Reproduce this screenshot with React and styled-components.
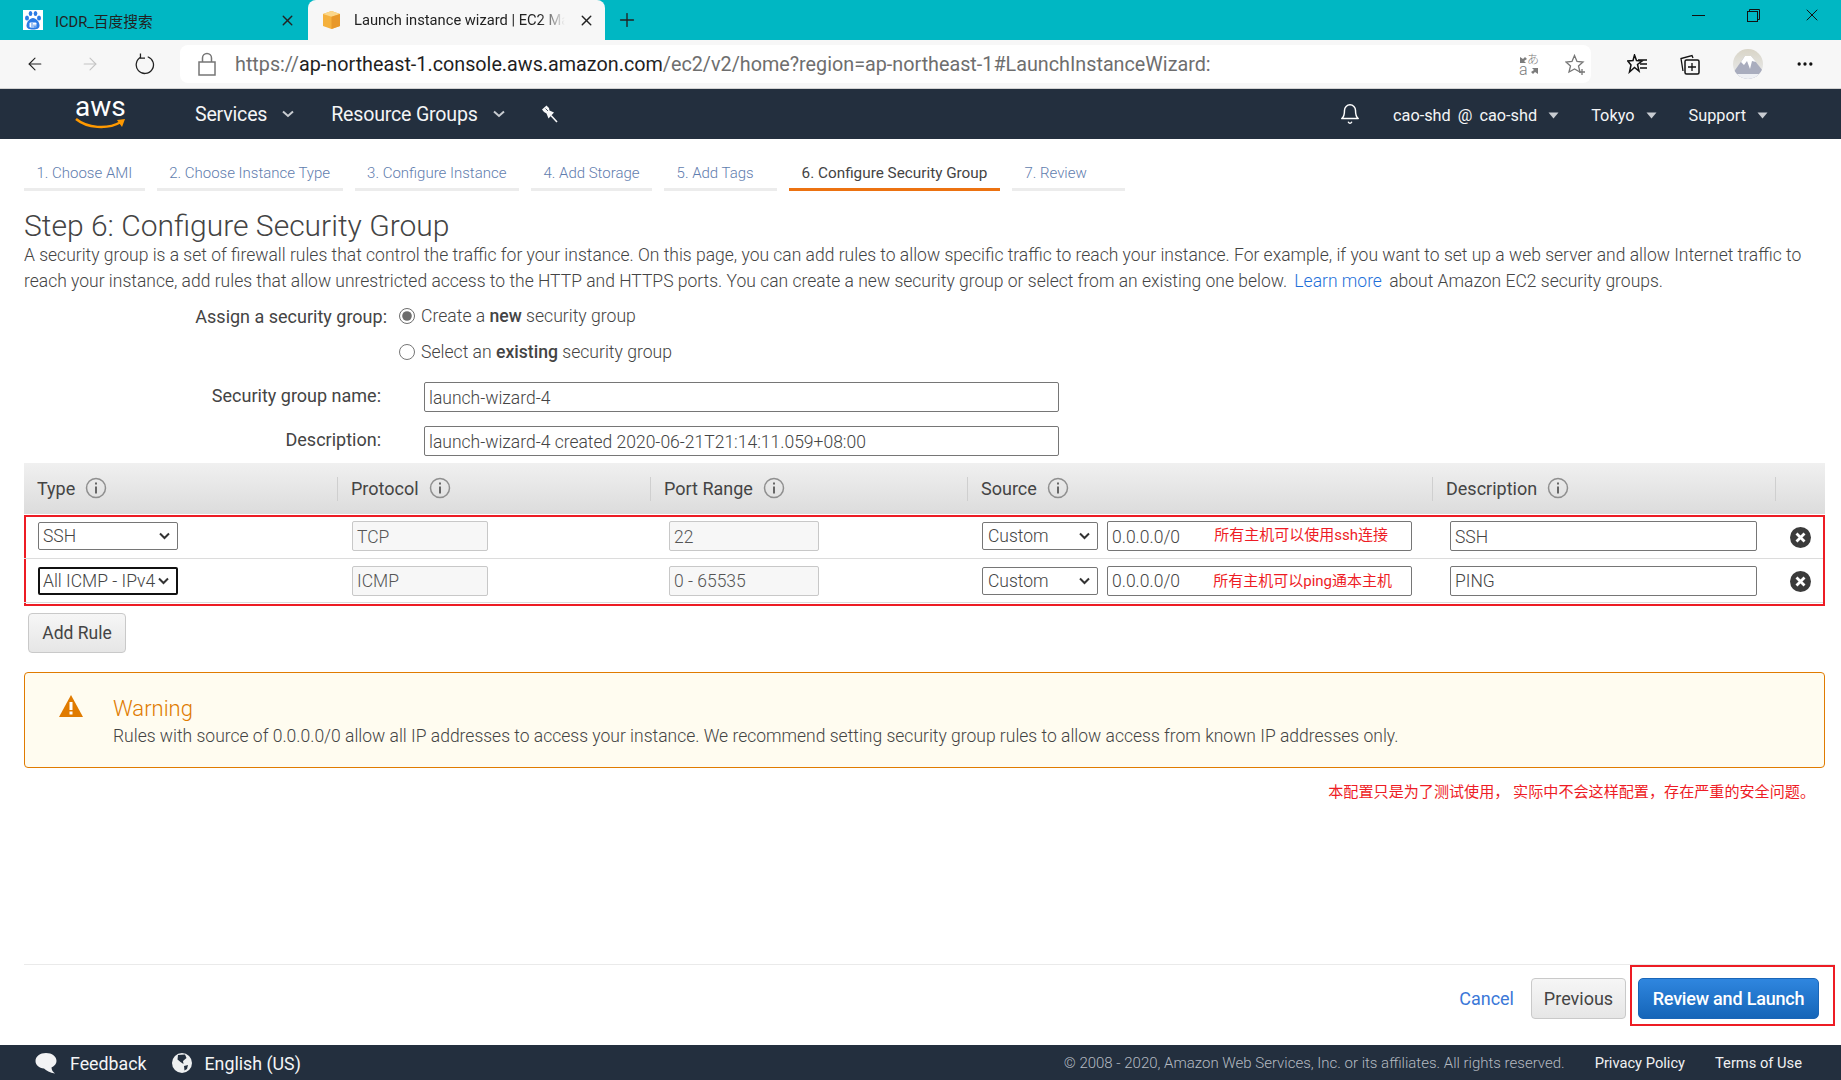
import React from "react";
import styled, { createGlobalStyle } from "styled-components";
import { FiBell, FiPlus, FiX, FiArrowLeft, FiArrowRight, FiMoreHorizontal } from "react-icons/fi";

const steps = [
  "1. Choose AMI",
  "2. Choose Instance Type",
  "3. Configure Instance",
  "4. Add Storage",
  "5. Add Tags",
  "6. Configure Security Group",
  "7. Review",
];

const rules = [
  { type: "SSH", protocol: "TCP", port: "22", note: "所有主机可以使用ssh连接", noteRight: 24, noteTop: 2, desc: "SSH", focused: false },
  { type: "All ICMP - IPv4", protocol: "ICMP", port: "0 - 65535", note: "所有主机可以ping通本主机", noteRight: 20, noteTop: 3, desc: "PING", focused: true },
];

const selectArrow =
  "url(\"data:image/svg+xml,%3Csvg xmlns='http://www.w3.org/2000/svg' width='11' height='8'%3E%3Cpath d='M1 1.5L5.5 6L10 1.5' fill='none' stroke='%23333' stroke-width='2'/%3E%3C/svg%3E\")";

const InfoIcon = () => (
  <svg width="22" height="22" viewBox="0 0 22 22">
    <circle cx="11" cy="11" r="9.5" fill="none" stroke="#8f8f8f" strokeWidth="1.5" />
    <rect x="10" y="9.5" width="2" height="7" fill="#666" />
    <rect x="10" y="5.5" width="2" height="2" fill="#666" />
  </svg>
);

const Caret = () => (
  <svg width="11" height="7" viewBox="0 0 11 7">
    <path d="M0.5 0.5H10.5L5.5 6.5Z" fill="#c8ccd1" />
  </svg>
);

const Chevron = () => (
  <svg width="12" height="8" viewBox="0 0 12 8">
    <path d="M1 1.5L6 6L11 1.5" fill="none" stroke="#c8ccd1" strokeWidth="2" />
  </svg>
);

const BaiduIcon = () => (
  <svg width="20" height="20" viewBox="0 0 20 20">
    <rect width="20" height="20" fill="#fff" />
    <ellipse cx="4" cy="8" rx="2" ry="2.6" fill="#2c7be5" />
    <ellipse cx="16" cy="8" rx="2" ry="2.6" fill="#2c7be5" />
    <ellipse cx="7.5" cy="3.5" rx="1.8" ry="2.6" fill="#2c7be5" />
    <ellipse cx="12.5" cy="3.5" rx="1.8" ry="2.6" fill="#2c7be5" />
    <path d="M10 8C7 8 3.5 12 3.5 15.5C3.5 18.5 6 19.5 10 19.5S16.5 18.5 16.5 15.5C16.5 12 13 8 10 8Z" fill="#2c7be5" />
    <rect x="6.5" y="12.5" width="7" height="5" rx="1" fill="#fff" />
    <path d="M9 13V17M11 14.5V17H13V14.5" fill="none" stroke="#2c7be5" strokeWidth="0.9" />
  </svg>
);

const CubeIcon = () => (
  <svg width="19" height="20" viewBox="0 0 19 20">
    <path d="M9.5 1L18 4V16L9.5 19L1 16V4Z" fill="#f5b13d" />
    <path d="M9.5 1L18 4L9.5 6.8L1 4Z" fill="#fbd78a" />
    <path d="M9.5 6.8L18 4V16L9.5 19Z" fill="#e8982a" />
  </svg>
);

const LockIcon = () => (
  <svg width="18" height="24" viewBox="0 0 18 24">
    <rect x="1" y="10" width="16" height="13" fill="none" stroke="#767676" strokeWidth="1.5" />
    <path d="M4.5 10V6A4.5 4.5 0 0 1 13.5 6V10" fill="none" stroke="#767676" strokeWidth="1.5" />
  </svg>
);

const RefreshIcon = () => (
  <svg width="22" height="24" viewBox="0 0 22 24">
    <path d="M6.5 4.5A9.5 9.5 0 1 0 14 4" fill="none" stroke="#222" strokeWidth="1.4" />
    <path d="M6 0.5V5.5H11" fill="none" stroke="#222" strokeWidth="1.4" />
  </svg>
);

const TranslateIcon = () => (
  <svg width="20" height="21" viewBox="0 0 20 21" overflow="visible">
    <path d="M1 3V9H7L5 7L8 5L6 3L4 5ZM19 20V14H13L15 16L12 18L14 20L16 18Z" fill="#7c7c7c" />
    <text x="8" y="10" fontSize="12" fill="#7c7c7c" fontFamily="Noto Sans CJK JP, sans-serif">あ</text>
    <text x="0" y="21" fontSize="16" fill="#7c7c7c" fontFamily="Roboto, sans-serif">a</text>
  </svg>
);

const StarPlusIcon = () => (
  <svg width="21" height="21" viewBox="0 0 21 21">
    <path d="M9.5 1.5L12 7.5L18 8L13.5 12L15 18L9.5 15L4 18L5.5 12L1 8L7 7.5Z" fill="none" stroke="#777" strokeWidth="1.3" />
    <path d="M17 15V21M14 18H20" stroke="#777" strokeWidth="1.3" />
  </svg>
);

const FavoritesIcon = () => (
  <svg width="21" height="20" viewBox="0 0 21 20">
    <path d="M7.5 1L9.5 6.5L15 7L10.5 10.5L12 17L7.5 13.5L2.5 18L4 11L0.8 7L6 6.5Z" fill="none" stroke="#111" strokeWidth="1.5" />
    <path d="M11 6H20M13 10H20M13 14H20" stroke="#111" strokeWidth="1.4" />
  </svg>
);

const CollectionsIcon = () => (
  <svg width="20" height="21" viewBox="0 0 20 21">
    <path d="M3 17L1 4.5L12 1.5L13 4" fill="none" stroke="#111" strokeWidth="1.3" />
    <rect x="5" y="6" width="14" height="14" rx="1.5" fill="none" stroke="#111" strokeWidth="1.5" />
    <path d="M12 9V17M8 13H16" stroke="#111" strokeWidth="1.3" />
  </svg>
);

const MountainAvatar = () => (
  <svg width="30" height="30" viewBox="0 0 30 30">
    <defs>
      <clipPath id="avatar-clip">
        <circle cx="15" cy="15" r="15" />
      </clipPath>
      <linearGradient id="avatar-sky" x1="0" y1="0" x2="0" y2="1">
        <stop offset="0" stopColor="#d8d4c6" />
        <stop offset="1" stopColor="#eceef2" />
      </linearGradient>
    </defs>
    <g clipPath="url(#avatar-clip)">
      <rect width="30" height="30" fill="url(#avatar-sky)" />
      <path d="M0 24L12 7H18L30 22V30H0Z" fill="#a9adbe" />
      <path d="M8 13L12 7H18L23 13L19 12L17 20L14 12L11 16Z" fill="#fff" />
      <rect y="25" width="30" height="5" fill="#eef0f4" />
    </g>
  </svg>
);

const RestoreIcon = () => (
  <svg width="13" height="13" viewBox="0 0 13 13">
    <rect x="0.5" y="2.5" width="10" height="10" fill="none" stroke="#111" />
    <path d="M2.5 2.5V0.5H12.5V10.5H10.5" fill="none" stroke="#111" />
  </svg>
);

const PinIcon = () => (
  <svg width="16" height="18" viewBox="0 0 16 18">
    <path d="M0 4.5L4.5 0.5L7 3L7.5 5.5L12 7.5L6.5 13.5L4.5 8.5L2 7Z" fill="#f7f8f9" />
    <path d="M9 10.5L15 17" stroke="#f7f8f9" strokeWidth="1.6" />
    <path d="M3.5 3.5L6 6" stroke="#232f3e" strokeWidth="0.8" />
  </svg>
);

const WarningIcon = () => (
  <svg width="24" height="22" viewBox="0 0 24 22">
    <path d="M12 0L24 22H0Z" fill="#e07b00" />
    <rect x="10.5" y="7" width="3" height="8" fill="#fff" />
    <rect x="10.5" y="16.5" width="3" height="3" fill="#fff" />
  </svg>
);

const RemoveIcon = () => (
  <svg width="21" height="21" viewBox="0 0 21 21">
    <circle cx="10.5" cy="10.5" r="10.5" fill="#3b3b3b" />
    <path d="M6.5 6.5L14.5 14.5M14.5 6.5L6.5 14.5" stroke="#fff" strokeWidth="2.8" />
  </svg>
);

const BubbleIcon = () => (
  <svg width="22" height="21" viewBox="0 0 22 21">
    <path d="M11 0C5 0 0.5 3.5 0.5 8C0.5 12 4 15 9 15.5C11 17.5 15 20 20 20.5C18 19 16.5 17 16.5 14.5C19.5 13 21.5 11 21.5 8C21.5 3.5 17 0 11 0Z" fill="#f2f3f4" />
  </svg>
);

const GlobeIcon = () => (
  <svg width="20" height="20" viewBox="0 0 20 20">
    <circle cx="10" cy="10" r="10" fill="#eef0f1" />
    <path d="M6 2L13 1.5L14.5 5L11 8L11.5 11L8.5 9L5.5 6.5Z" fill="#232f3e" />
    <path d="M12 13L16 12L15 16L12.5 17.5Z" fill="#232f3e" />
  </svg>
);

const App = () => {
  return (
    <Page>
      <GlobalStyle />

      <TabStrip>
        <BrowserTab>
          <BaiduIcon />
          <TabTitle>ICDR_百度搜索</TabTitle>
          <TabClose><FiX size={17} /></TabClose>
        </BrowserTab>
        <BrowserTab $active>
          <CubeIcon />
          <TabTitle $fade>Launch instance wizard | EC2 Management Console</TabTitle>
          <TabClose><FiX size={17} /></TabClose>
        </BrowserTab>
        <NewTab><FiPlus size={22} strokeWidth={1.5} /></NewTab>
        <WindowButtons>
          <Minimize />
          <RestoreIcon />
          <FiX size={20} strokeWidth={1.2} />
        </WindowButtons>
      </TabStrip>

      <Toolbar>
        <ToolButton><FiArrowLeft size={24} strokeWidth={1.3} /></ToolButton>
        <ToolButton $muted><FiArrowRight size={24} strokeWidth={1.3} /></ToolButton>
        <ToolButton><RefreshIcon /></ToolButton>
        <AddressPill>
          <LockIcon />
          <UrlText>
            <UrlDim>https://</UrlDim>ap-northeast-1.console.aws.amazon.com<UrlDim>/ec2/v2/home?region=ap-northeast-1#LaunchInstanceWizard:</UrlDim>
          </UrlText>
          <PillIcons>
            <TranslateIcon />
            <StarPlusIcon />
          </PillIcons>
        </AddressPill>
        <ToolIcons>
          <FavoritesIcon />
          <CollectionsIcon />
          <MountainAvatar />
          <FiMoreHorizontal size={20} />
        </ToolIcons>
      </Toolbar>

      <NavBar>
        <AwsLogo>
          <svg width="52" height="34" viewBox="0 0 52 34" overflow="visible">
            <text x="0" y="19" fontSize="28" fill="#fff" fontFamily="Roboto, sans-serif">aws</text>
            <path d="M1 22C12 31 32 33 46 25" fill="none" stroke="#f90" strokeWidth="2.5" />
            <path d="M42 23L50 22L47 30Z" fill="#f90" />
          </svg>
        </AwsLogo>
        <NavMenu>Services <Chevron /></NavMenu>
        <NavMenu>Resource Groups <Chevron /></NavMenu>
        <PinIcon />
        <NavRight>
          <FiBell size={22} strokeWidth={1.6} color="#fff" />
          <NavSmall $wide>cao-shd @ cao-shd <Caret /></NavSmall>
          <NavSmall>Tokyo <Caret /></NavSmall>
          <NavSmall>Support <Caret /></NavSmall>
        </NavRight>
      </NavBar>

      <Content>
        <Steps>
          {steps.map((step, i) => (
            <Step key={step} $active={i === 5}>{step}</Step>
          ))}
        </Steps>

        <Title>Step 6: Configure Security Group</Title>
        <Intro>
          A security group is a set of firewall rules that control the traffic for your instance. On this page, you can add rules to allow specific traffic to reach your instance. For example, if you want to set up a web server and allow Internet traffic to reach your instance, add rules that allow unrestricted access to the HTTP and HTTPS ports. You can create a new security group or select from an existing one below. <IntroLink>Learn more</IntroLink> about Amazon EC2 security groups.
        </Intro>

        <RadioForm>
          <FormLabel>Assign a security group:</FormLabel>
          <RadioLine>
            <input type="radio" name="assign" defaultChecked />
            <span>Create a <b>new</b> security group</span>
          </RadioLine>
          <span />
          <RadioLine>
            <input type="radio" name="assign" />
            <span>Select an <b>existing</b> security group</span>
          </RadioLine>
        </RadioForm>

        <NameForm>
          <NameLabel>Security group name:</NameLabel>
          <NameInput value="launch-wizard-4" readOnly />
          <NameLabel>Description:</NameLabel>
          <NameInput value="launch-wizard-4 created 2020-06-21T21:14:11.059+08:00" readOnly />
        </NameForm>

        <TableHead>
          <HeadCell>Type <InfoIcon /></HeadCell>
          <HeadCell $rule>Protocol <InfoIcon /></HeadCell>
          <HeadCell $rule>Port Range <InfoIcon /></HeadCell>
          <HeadCell $rule>Source <InfoIcon /></HeadCell>
          <HeadCell $rule>Description <InfoIcon /></HeadCell>
          <HeadCell $rule />
        </TableHead>

        <RuleBox>
          {rules.map((rule) => (
            <RuleRow key={rule.desc}>
              <TypeSelect value={rule.type} $focused={rule.focused} onChange={() => {}}>
                <option>{rule.type}</option>
              </TypeSelect>
              <GreyInput $width={136} $left={15} value={rule.protocol} readOnly />
              <GreyInput $width={150} $left={19} value={rule.port} readOnly />
              <SourceCell>
                <SourceSelect value="Custom" onChange={() => {}}>
                  <option>Custom</option>
                </SourceSelect>
                <CidrWrap>
                  <WhiteInput value="0.0.0.0/0" readOnly />
                  <CidrNote $right={rule.noteRight} $top={rule.noteTop}>{rule.note}</CidrNote>
                </CidrWrap>
              </SourceCell>
              <WhiteInput value={rule.desc} readOnly />
              <RemoveCell><RemoveIcon /></RemoveCell>
            </RuleRow>
          ))}
        </RuleBox>

        <AddRule>Add Rule</AddRule>

        <WarningBox>
          <WarningIcon />
          <div>
            <WarningTitle>Warning</WarningTitle>
            <WarningText>Rules with source of 0.0.0.0/0 allow all IP addresses to access your instance. We recommend setting security group rules to allow access from known IP addresses only.</WarningText>
          </div>
        </WarningBox>

        <RedNote>本配置只是为了测试使用， 实际中不会这样配置，存在严重的安全问题。</RedNote>

        <Actions>
          <CancelLink>Cancel</CancelLink>
          <GreyButton>Previous</GreyButton>
          <ReviewFrame>
            <BlueButton>Review and Launch</BlueButton>
          </ReviewFrame>
        </Actions>
      </Content>

      <FootBar>
        <FootItem><BubbleIcon /> Feedback</FootItem>
        <FootItem><GlobeIcon /> English (US)</FootItem>
        <FootRight>
          <Copyright>© 2008 - 2020, Amazon Web Services, Inc. or its affiliates. All rights reserved.</Copyright>
          <FootLink>Privacy Policy</FootLink>
          <FootLink>Terms of Use</FootLink>
        </FootRight>
      </FootBar>
    </Page>
  );
};

const GlobalStyle = createGlobalStyle`
  html, body {
    margin: 0;
    padding: 0;
    background: #fff;
  }
  * {
    box-sizing: border-box;
  }
`;

const Page = styled.div`
  height: 1080px;
  display: flex;
  flex-direction: column;
  overflow: hidden;
  font-family: Roboto, "Noto Sans CJK SC", sans-serif;
  font-weight: 300;
  color: #444;
`;

// ===== Browser chrome =====
const TabStrip = styled.div`
  height: 40px;
  flex: none;
  display: flex;
  background: #00b7c3;
`;

const BrowserTab = styled.div`
  width: ${(props) => (props.$active ? "297px" : "308px")};
  display: flex;
  align-items: center;
  padding: 0 ${(props) => (props.$active ? "10px" : "12px")} 0 ${(props) => (props.$active ? "14px" : "23px")};
  gap: ${(props) => (props.$active ? "13px" : "12px")};
  background: ${(props) => (props.$active ? "#f7f7f7" : "transparent")};
  border-radius: 8px 8px 0 0;
  color: #222;
  font-weight: 400;
`;

const TabTitle = styled.div`
  flex: 1;
  min-width: 0;
  font-size: 14.7px;
  white-space: nowrap;
  overflow: hidden;
  ${(props) =>
    props.$fade &&
    "mask-image: linear-gradient(to right, #000 88%, transparent 100%);"}
`;

const TabClose = styled.div`
  display: flex;
  color: #222;
`;

const NewTab = styled.div`
  display: flex;
  align-items: center;
  margin-left: 11px;
  color: #222;
`;

const WindowButtons = styled.div`
  margin-left: auto;
  width: 149px;
  height: 30px;
  padding-right: 19px;
  display: flex;
  align-items: center;
  justify-content: space-between;
  color: #111;
`;

const Minimize = styled.div`
  width: 13px;
  height: 1px;
  background: #111;
`;

const Toolbar = styled.div`
  height: 49px;
  flex: none;
  display: flex;
  align-items: center;
  padding-left: 25px;
  background: #f7f7f7;
  border-bottom: 1px solid #d2d2d2;
`;

const ToolButton = styled.div`
  width: 20px;
  margin-right: 35px;
  display: flex;
  justify-content: center;
  color: ${(props) => (props.$muted ? "#c4c4c4" : "#222")};

  &:nth-child(3) {
    margin-right: 25px;
  }
`;

const AddressPill = styled.div`
  width: 1411px;
  height: 38px;
  flex: none;
  display: flex;
  align-items: center;
  padding: 0 5px 0 18px;
  background: #fff;
  border-radius: 8px;
`;

const UrlText = styled.div`
  margin-left: 19px;
  font-size: 19.75px;
  font-weight: 400;
  color: #1f1f1f;
  white-space: nowrap;
`;

const UrlDim = styled.span`
  color: #6e6e6e;
`;

const PillIcons = styled.div`
  margin-left: auto;
  display: flex;
  align-items: center;
  gap: 26px;
`;

const ToolIcons = styled.div`
  flex: 1;
  padding: 0 26px 0 36px;
  display: flex;
  align-items: center;
  justify-content: space-between;
  color: #111;
`;

// ===== AWS nav =====
const NavBar = styled.div`
  height: 50px;
  flex: none;
  display: flex;
  align-items: center;
  padding-left: 75px;
  background: #232f3e;
  font-weight: 400;
  color: #f4f5f6;
`;

const AwsLogo = styled.div`
  width: 120px;
  display: flex;
`;

const NavMenu = styled.div`
  display: flex;
  align-items: center;
  gap: 15px;
  margin-right: 37px;
  font-size: 19.6px;
  letter-spacing: -0.2px;
`;

const NavRight = styled.div`
  margin-left: auto;
  padding-right: 73px;
  display: flex;
  align-items: center;
  gap: 32px;
`;

const NavSmall = styled.div`
  display: flex;
  align-items: center;
  gap: 11px;
  margin-top: 2px;
  font-size: 16.3px;
  word-spacing: ${(props) => (props.$wide ? "3px" : "0")};
`;

// ===== Wizard content =====
const Content = styled.div`
  flex: 1;
  min-height: 0;
  display: flex;
  flex-direction: column;
  padding: 0 16px 0 24px;
`;

const Steps = styled.div`
  display: flex;
  gap: 12px;
  padding-top: 16px;
`;

const Step = styled.div`
  height: 36px;
  min-width: 113px;
  padding: 2px 12.5px 0;
  display: flex;
  align-items: center;
  font-size: ${(props) => (props.$active ? "15.3px" : "15px")};
  white-space: nowrap;
  border-bottom: 3px solid ${(props) => (props.$active ? "#ec7211" : "#ececec")};
  color: ${(props) => (props.$active ? "#444" : "#5f7dae")};
  font-weight: ${(props) => (props.$active ? 400 : 300)};
`;

const Title = styled.h1`
  margin: 16px 0 0;
  font-size: 30px;
  line-height: 38px;
  font-weight: 300;
  color: #444;
`;

const Intro = styled.p`
  margin: -3px 0 0;
  font-size: 17.5px;
  line-height: 26px;
  color: #444;
`;

const IntroLink = styled.a`
  color: #1e6fd9;
  margin: 0 3px;
`;

const RadioForm = styled.div`
  display: grid;
  grid-template-columns: 363px 1fr;
  grid-auto-rows: 36px;
  margin-top: 4px;
  font-size: 17.6px;
  align-items: center;
`;

const FormLabel = styled.div`
  text-align: right;
  font-weight: 400;
  font-size: 18px;
`;

const RadioLine = styled.label`
  display: flex;
  align-items: center;
  gap: 6px;
  padding-left: 12px;

  input {
    margin: 0;
    width: 16px;
    height: 16px;
    accent-color: #6d6d6d;
  }

  b {
    font-weight: 500;
  }
`;

const NameForm = styled.div`
  display: grid;
  grid-template-columns: 357px 635px;
  column-gap: 43px;
  row-gap: 14px;
  margin-top: 12px;
  align-items: center;
`;

const NameLabel = styled.div`
  text-align: right;
  font-size: 18px;
  font-weight: 400;
  padding-bottom: 4px;
`;

const NameInput = styled.input`
  height: 30px;
  padding: 1px 4px 0;
  border: 1px solid #767676;
  border-radius: 2px;
  font: 300 17.5px Roboto, sans-serif;
  color: #444;
  outline: none;
`;

const ruleColumns = "313px 313px 317px 465px 343px 50px";

const TableHead = styled.div`
  height: 51px;
  margin-top: 7px;
  display: grid;
  grid-template-columns: ${ruleColumns};
  align-items: center;
  background: linear-gradient(#f0f0f0, #dcdcdc);
`;

const HeadCell = styled.div`
  height: 24px;
  padding: 0 0 1px 13px;
  display: flex;
  align-items: center;
  gap: 10px;
  font-size: 18px;
  font-weight: 400;
  border-left: ${(props) => (props.$rule ? "1px solid #cfcfcf" : "none")};
`;

const RuleBox = styled.div`
  width: 1801px;
  height: 91px;
  margin-top: 1px;
  border: 2px solid #ed1c24;
`;

const RuleRow = styled.div`
  height: 44px;
  margin-left: -2px;
  display: grid;
  grid-template-columns: ${ruleColumns};
  align-items: center;
  border-bottom: 1px solid #dcdcdc;

  &:first-child {
    height: 42px;
    padding-bottom: 3px;
  }
`;

const selectBase = `
  height: 28px;
  appearance: none;
  background: #fff ${selectArrow} no-repeat right 7px center;
  font: 300 17.5px Roboto, sans-serif;
  color: #444;
  outline: none;
  border-radius: 2px;
`;

const TypeSelect = styled.select`
  ${selectBase}
  width: 140px;
  margin-left: 14px;
  padding: 0 0 0 ${(props) => (props.$focused ? "3px" : "4px")};
  border: ${(props) => (props.$focused ? "2px solid #111" : "1px solid #767676")};
`;

const SourceCell = styled.div`
  display: flex;
  align-items: center;
  gap: 9px;
  padding-left: 15px;
`;

const SourceSelect = styled.select`
  ${selectBase}
  width: 116px;
  flex: none;
  padding: 0 0 0 5px;
  border: 1px solid #767676;
`;

const CidrWrap = styled.div`
  position: relative;
  width: 305px;
  flex: none;
  display: flex;
`;

const CidrNote = styled.span`
  position: absolute;
  top: ${(props) => props.$top}px;
  right: ${(props) => props.$right}px;
  font-size: 15px;
  font-weight: 400;
  color: #ee1c25;
  white-space: nowrap;
`;

const GreyInput = styled.input`
  width: ${(props) => props.$width}px;
  height: 30px;
  margin-left: ${(props) => props.$left}px;
  padding: 1px 4px 0;
  background: #f7f7f7;
  border: 1px solid #c8c8c8;
  border-radius: 2px;
  font: 300 17.5px Roboto, sans-serif;
  color: #555;
  outline: none;
`;

const WhiteInput = styled.input`
  width: 100%;
  height: 30px;
  padding: 1px 4px 0;
  background: #fff;
  border: 1px solid #767676;
  border-radius: 2px;
  font: 300 17.5px Roboto, sans-serif;
  color: #444;
  outline: none;

  ${RuleRow} > & {
    width: 307px;
    margin-left: 18px;
  }
`;

const RemoveCell = styled.div`
  display: flex;
  padding-left: 15px;
  padding-top: 2px;
`;

const AddRule = styled.button`
  width: 98px;
  height: 40px;
  margin: 7px 0 0 4px;
  border: 1px solid #c9c9c9;
  border-radius: 4px;
  background: linear-gradient(#f6f6f6, #e6e6e6);
  font: 400 17.5px Roboto, sans-serif;
  color: #444;
`;

const WarningBox = styled.div`
  height: 96px;
  margin-top: 19px;
  padding: 22px 20px 0 34px;
  display: flex;
  gap: 30px;
  align-items: flex-start;
  background: #fffcf0;
  border: 1px solid #e07b00;
  border-radius: 4px;
`;

const WarningTitle = styled.div`
  font-size: 22px;
  line-height: 28px;
  color: #e07b00;
`;

const WarningText = styled.div`
  font-size: 17.5px;
  line-height: 26px;
  color: #444;
`;

const RedNote = styled.div`
  margin-top: 14px;
  padding-right: 10px;
  text-align: right;
  font-size: 15.1px;
  font-weight: 400;
  line-height: 20px;
  color: #ee1c25;
`;

const Actions = styled.div`
  margin: auto -10px 0 0;
  height: 81px;
  display: flex;
  align-items: flex-start;
  justify-content: flex-end;
  border-top: 1px solid #eaeaea;
`;

const CancelLink = styled.a`
  margin: 23px 17px 0 0;
  font-size: 18px;
  font-weight: 400;
  color: #3b78d8;
`;

const GreyButton = styled.button`
  width: 95px;
  height: 41px;
  margin-top: 13px;
  border: 1px solid #c9c9c9;
  border-radius: 4px;
  background: linear-gradient(#f6f6f6, #e6e6e6);
  font: 400 18px Roboto, sans-serif;
  color: #444;
`;

const ReviewFrame = styled.div`
  width: 205px;
  height: 61px;
  margin-left: 4px;
  padding: 11px 0 0 6px;
  border: 2px solid #ed1c24;
`;

const BlueButton = styled.button`
  width: 181px;
  height: 41px;
  border: 1px solid #1a66b8;
  border-radius: 5px;
  background: linear-gradient(#2f86df, #1565b8);
  font: 500 18px Roboto, sans-serif;
  letter-spacing: -0.2px;
  color: #fff;
`;

// ===== Footer =====
const FootBar = styled.div`
  height: 35px;
  flex: none;
  display: flex;
  align-items: center;
  padding: 1px 39px 0 35px;
  gap: 25px;
  background: #232f3e;
  color: #f4f5f6;
  font-weight: 400;
`;

const FootItem = styled.div`
  display: flex;
  align-items: center;
  gap: 13px;
  font-size: 17.8px;
`;

const FootRight = styled.div`
  margin-left: auto;
  display: flex;
  align-items: center;
  gap: 30px;
`;

const Copyright = styled.div`
  font-size: 15px;
  font-weight: 300;
  color: #b4bac1;
`;

const FootLink = styled.a`
  font-size: 14.7px;
  color: #f0f1f2;
`;

export default App;
